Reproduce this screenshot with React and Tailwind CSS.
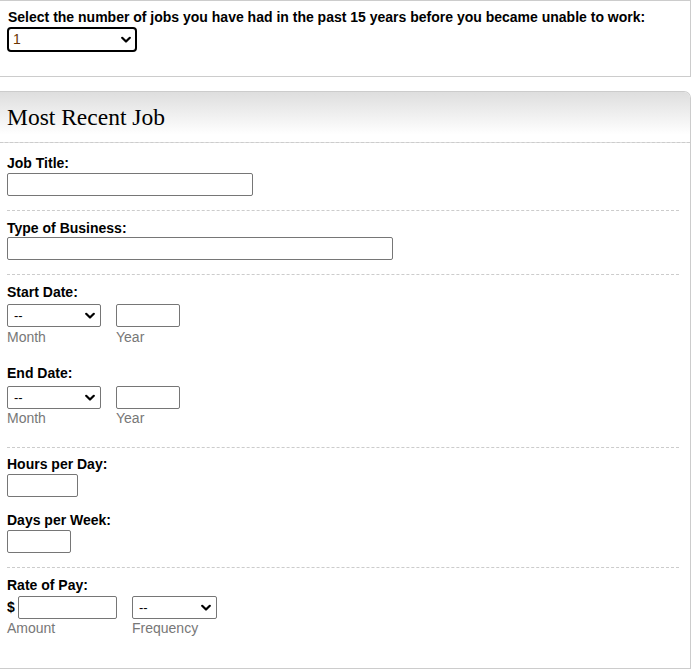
import { useState } from "react";

const labelCls = "block text-[14px] leading-[16px] font-bold text-black";
const hintCls = "block text-[14px] leading-[16px] text-[#777]";
const boxCls = "block h-[23px] border border-[#767676] rounded-[2px] bg-white";

const Chevron = () => (
    <svg className="absolute right-[6px] top-1/2 -translate-y-1/2 pointer-events-none" width="10" height="7" viewBox="0 0 10 7">
        <polyline points="1.2,1.2 5,5 8.8,1.2" fill="none" stroke="#000" strokeWidth="2.2" strokeLinecap="round" strokeLinejoin="round" />
    </svg>
);

const Select = ({ width, options, value, onChange }) => (
    <div className="relative" style={{ width }}>
        <select
            value={value}
            onChange={(e) => onChange(e.target.value)}
            className={`${boxCls} w-full appearance-none pl-[6px] pr-5 text-[13px] text-black outline-none`}
        >
            {options.map((o) => (
                <option key={o} value={o}>{o}</option>
            ))}
        </select>
        <Chevron />
    </div>
);

const months = ["--", "January", "February", "March", "April", "May", "June", "July", "August", "September", "October", "November", "December"];
const freqs = ["--", "Hourly", "Daily", "Weekly", "Monthly", "Yearly"];

const DateRow = ({ label, labelTop, selTop, hintTop }) => {
    const [month, setMonth] = useState("--");
    return (
        <div>
            <span className={labelCls} style={{ marginTop: labelTop }}>{label}</span>
            <div className="flex gap-[15px]" style={{ marginTop: selTop }}>
                <div>
                    <Select width={94} options={months} value={month} onChange={setMonth} />
                    <span className={hintCls} style={{ marginTop: hintTop }}>Month</span>
                </div>
                <div>
                    <input type="text" className={`${boxCls} w-[64px] px-1 outline-none`} />
                    <span className={hintCls} style={{ marginTop: hintTop }}>Year</span>
                </div>
            </div>
        </div>
    );
};

export default function App() {
    const [jobs, setJobs] = useState("1");
    const [freq, setFreq] = useState("--");

    return (
        <div className="w-[691px] bg-white font-['Liberation_Sans',Arial,sans-serif] text-black">
            {/* number of jobs */}
            <div className="border border-l-0 border-[#ccc] pl-[8px] pt-[8px] pb-[24px]">
                <span className={labelCls}>Select the number of jobs you have had in the past 15 years before you became unable to work:</span>
                <div className="relative mt-[2px] -ml-[1px] w-[130px]">
                    <select
                        value={jobs}
                        onChange={(e) => setJobs(e.target.value)}
                        className="block h-[25px] w-full appearance-none rounded-[4px] border-2 border-black bg-white pl-[4px] text-[14px] text-[#6b3500] outline-none"
                    >
                        {["1", "2", "3", "4", "5"].map((n) => (
                            <option key={n} value={n}>{n}</option>
                        ))}
                    </select>
                    <Chevron />
                </div>
            </div>

            {/* job panel */}
            <div className="mt-[14px] border border-l-0 border-[#ccc] rounded-tr-[7px] overflow-hidden">
                <div className="bg-linear-to-b from-[#dedede] to-white to-85% pl-[7px] pt-[11px] pb-[11px] border-b border-dashed border-[#ccc]">
                    <h2 className="font-['Liberation_Serif',Georgia,serif] text-[23.5px] leading-[28px] font-normal">Most Recent Job</h2>
                </div>

                <div className="pl-[7px] pr-[11px] pb-[32px]">
                    <div className="border-b border-dashed border-[#ccc] pt-[12px] pb-[14px]">
                        <span className={labelCls}>Job Title:</span>
                        <input type="text" className={`${boxCls} mt-[2px] w-[246px] px-1 outline-none`} />
                    </div>

                    <div className="border-b border-dashed border-[#ccc] pt-[9px] pb-[14px]">
                        <span className={labelCls}>Type of Business:</span>
                        <input type="text" className={`${boxCls} mt-[1px] w-[386px] px-1 outline-none`} />
                    </div>

                    <div className="border-b border-dashed border-[#ccc] pt-[9px] pb-[21px]">
                        <DateRow label="Start Date:" labelTop={0} selTop={4} hintTop={2} />
                        <DateRow label="End Date:" labelTop={20} selTop={5} hintTop={1} />
                    </div>

                    <div className="border-b border-dashed border-[#ccc] pt-[8px] pb-[14px]">
                        <span className={labelCls}>Hours per Day:</span>
                        <input type="text" className={`${boxCls} mt-[2px] w-[71px] px-1 outline-none`} />
                        <span className={`${labelCls} mt-[15px]`}>Days per Week:</span>
                        <input type="text" className={`${boxCls} mt-[2px] w-[64px] px-1 outline-none`} />
                    </div>

                    <div className="pt-[9px]">
                        <span className={labelCls}>Rate of Pay:</span>
                        <div className="mt-[3px] flex gap-[15px]">
                            <div>
                                <div className="flex items-center">
                                    <span className="w-[11px] text-[14px] font-bold">$</span>
                                    <input type="text" className={`${boxCls} w-[99px] px-1 outline-none`} />
                                </div>
                                <span className={`${hintCls} mt-[1px]`}>Amount</span>
                            </div>
                            <div>
                                <Select width={85} options={freqs} value={freq} onChange={setFreq} />
                                <span className={`${hintCls} mt-[1px]`}>Frequency</span>
                            </div>
                        </div>
                    </div>
                </div>
            </div>
        </div>
    );
}
